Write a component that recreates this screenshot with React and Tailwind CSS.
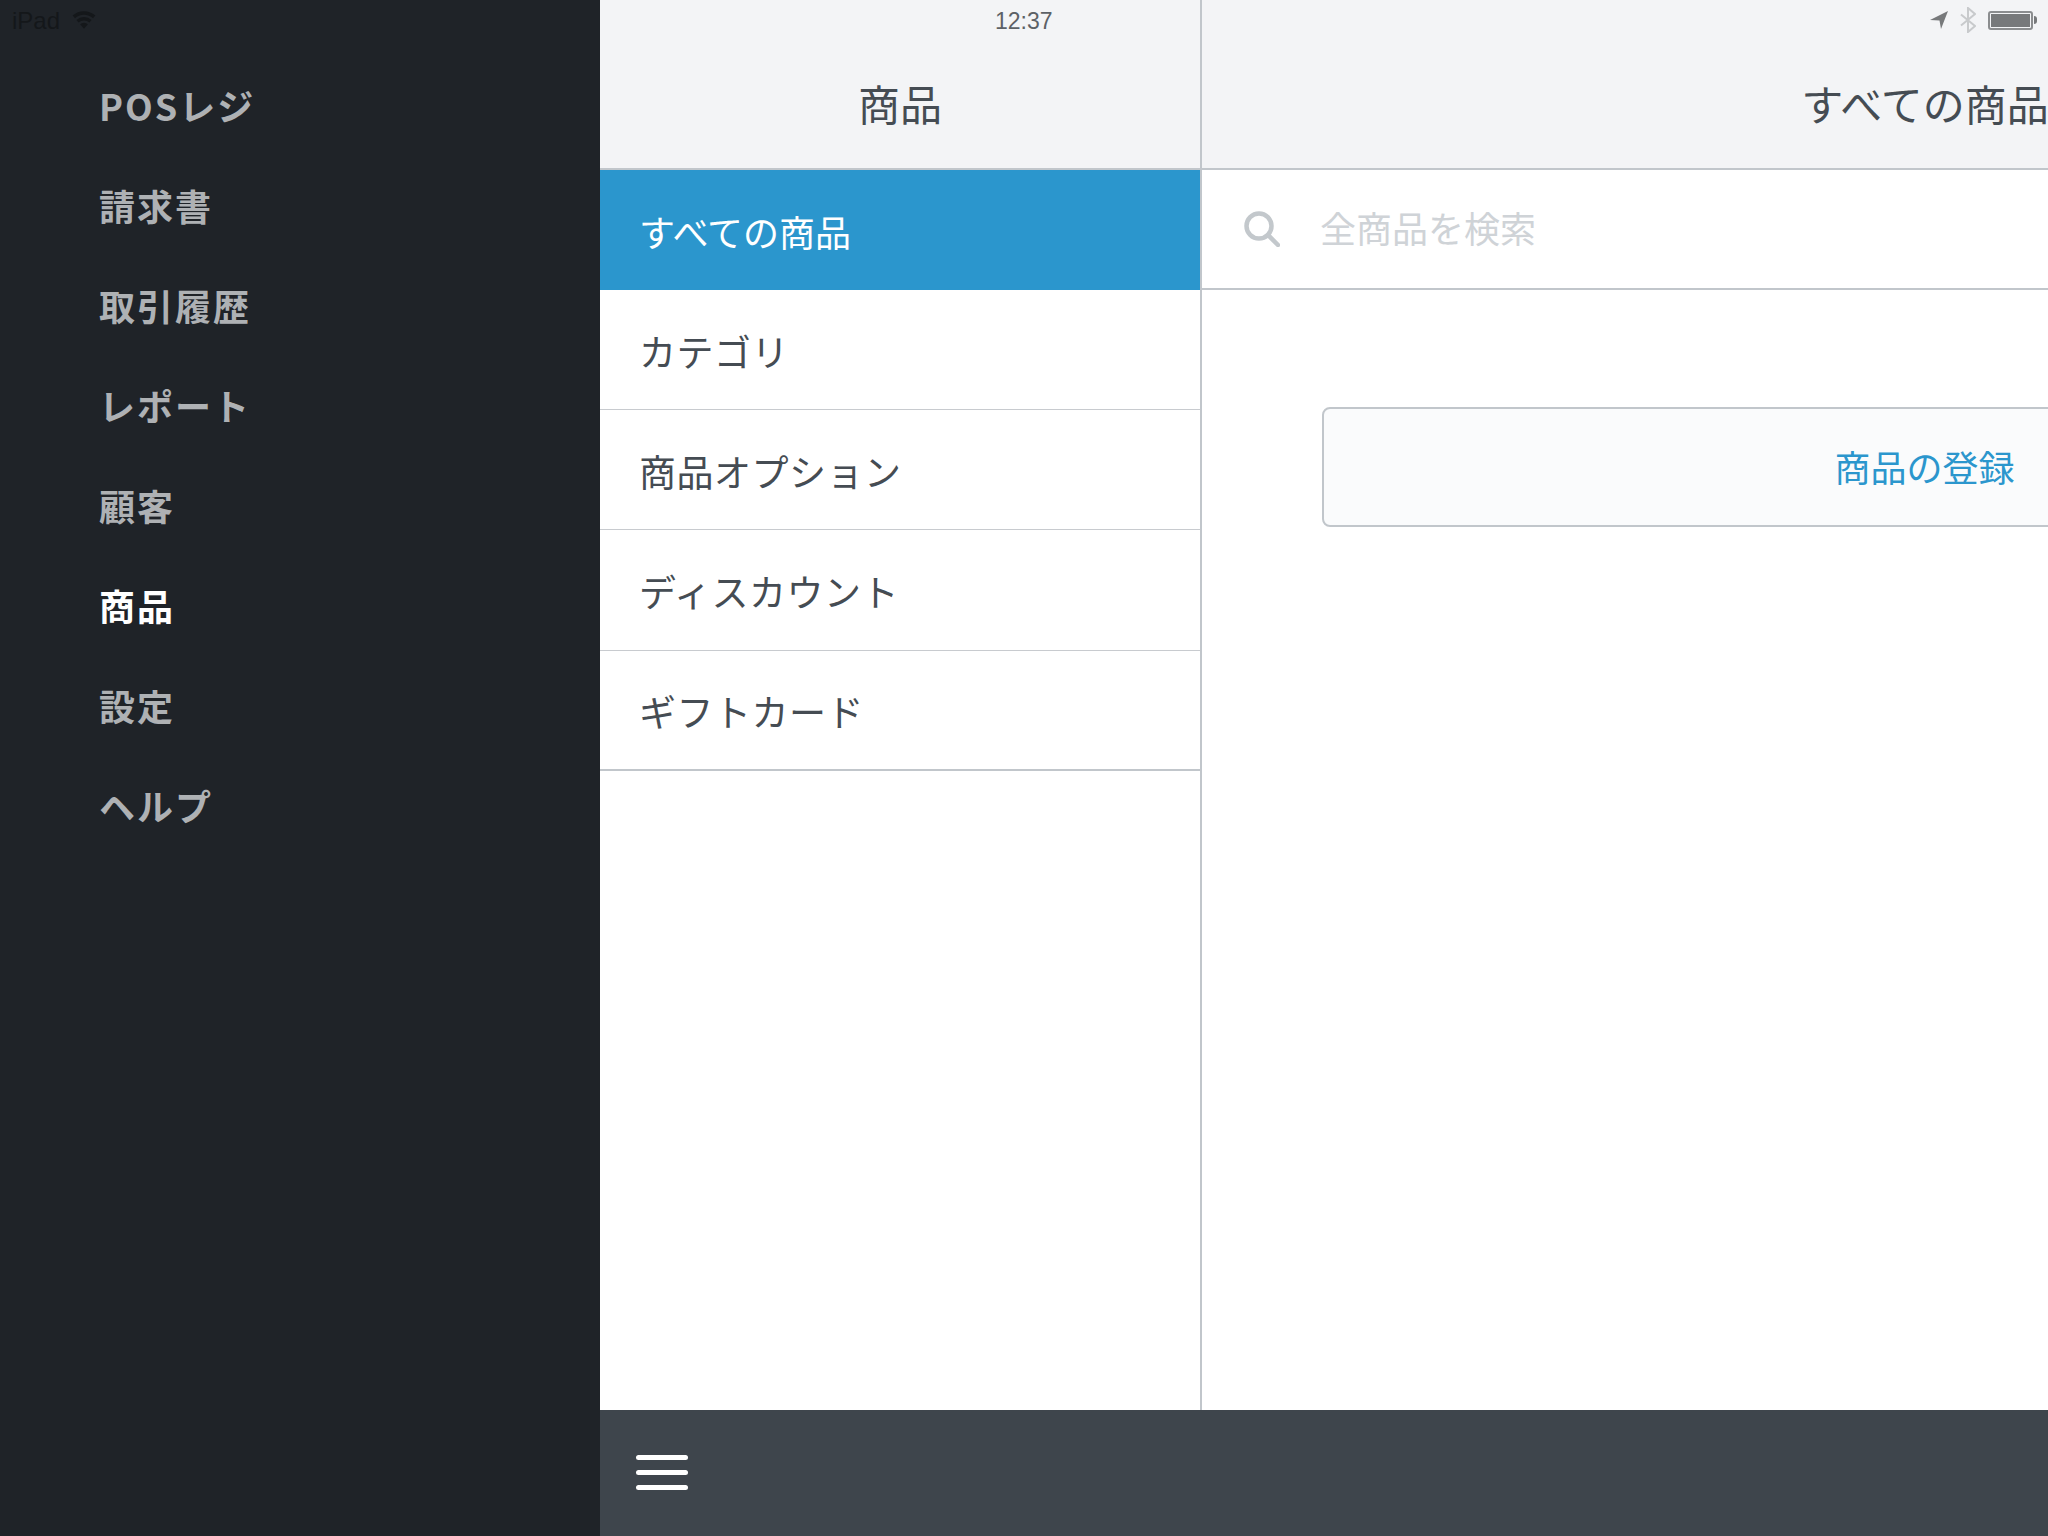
const sideItems = ["POSレジ", "請求書", "取引履歴", "レポート", "顧客", "商品", "設定", "ヘルプ"];
const rows = ["カテゴリ", "商品オプション", "ディスカウント", "ギフトカード"];

function StatusBar() {
  return (
    <div className="absolute top-0 left-0 w-[2048px] h-10 flex items-center justify-between font-['Liberation_Sans',sans-serif]">
      <div className="flex items-center gap-[11px] pl-3 pt-[1px] text-[24px] font-light text-[#14171a]">
        <span>iPad</span>
        <svg width="26" height="20" viewBox="0 0 24 18" fill="currentColor" className="-mt-1">
          <path d="M12 18 8.400 13.800a5.200 5.200 0 0 1 7.200 0z" />
          <path d="M7 12.200 5 9.900a10.400 10.400 0 0 1 14 0l-2 2.300a7.600 7.600 0 0 0-10 0z" />
          <path d="M3.700 8.300 1.500 5.800A15.600 15.600 0 0 1 12 1.800c4 0 7.700 1.500 10.500 4l-2.200 2.500A12.400 12.400 0 0 0 12 5c-3.200 0-6.100 1.200-8.300 3.300z" />
        </svg>
      </div>
      <span className="absolute left-[995px] pt-[2px] text-[23px] text-[#5c6166]">12:37</span>
      <div className="flex items-center pr-[11px]">
        <svg width="18" height="18" viewBox="0 0 18 18" fill="#77797b" className="mr-3">
          <path d="M0 9 18 0 11 18 9.500 9.500z" />
        </svg>
        <svg width="16" height="26" viewBox="0 0 16 26" fill="none" stroke="#c8cacc" strokeWidth="2" className="mr-3">
          <path d="M1 7.500 15 19 8 25V1l7 6L1 18.500" />
        </svg>
        <div className="w-[45px] h-[19px] border-2 border-[#8b8d8f] rounded-[3px] p-[1px]">
          <div className="w-full h-full bg-[#77797b]" />
        </div>
        <div className="w-[3px] h-[8px] ml-[1px] bg-[#77797b] rounded-r-sm" />
      </div>
    </div>
  );
}

export default function App() {
  return (
    <div className="relative w-[2048px] h-[1536px] overflow-hidden font-['Noto_Sans_CJK_JP',sans-serif]">
      <div className="flex w-[2648px] h-full">
        <nav className="w-[600px] shrink-0 bg-[#1f2328] pt-[55px] pl-[99px]">
          {sideItems.map((item) => (
            <div
              key={item}
              className={
                "h-[100px] flex items-center text-[36px] font-bold tracking-[2px] " +
                (item === "商品" ? "text-white" : "text-[#aeb1b4]")
              }
            >
              {item}
            </div>
          ))}
        </nav>

        <div className="flex-1 flex flex-col">
          <div className="flex-1 flex min-h-0">
            <div className="w-[602px] shrink-0 border-r-2 border-[#c1c6cb] bg-white">
              <div className="h-[170px] bg-[#f3f4f6] border-b-2 border-[#c1c6cb] pt-[36px] flex items-center justify-center text-[42px] text-[#454c53]">
                商品
              </div>
              <div className="h-[120px] bg-[#2b96cd] flex items-center pl-[39px] pt-[1px] text-[36px] text-white">
                すべての商品
              </div>
              {rows.map((row, i) => (
                <div
                  key={row}
                  className={
                    "flex items-center pl-[39px] pt-[4px] text-[37px] tracking-[0.5px] text-[#454c53] " +
                    (i === 2 ? "h-[121px] " : "h-[120px] ") +
                    (i === rows.length - 1 ? "border-b-2 border-[#c1c6cb]" : "border-b border-[#c8cbcf]")
                  }
                >
                  {row}
                </div>
              ))}
            </div>

            <div className="flex-1 bg-white">
              <div className="h-[170px] bg-[#f3f4f6] border-b-2 border-[#c1c6cb] pt-[36px] flex items-center justify-center text-[42px] text-[#454c53]">
                すべての商品
              </div>
              <div className="h-[120px] border-b-2 border-[#c1c6cb] flex items-center pl-[42px]">
                <svg width="36" height="36" viewBox="0 0 36 36" fill="none" stroke="#c3c8cc" strokeWidth="4.500" strokeLinecap="round">
                  <circle cx="15" cy="15" r="12.500" />
                  <path d="M24 24l10 10" />
                </svg>
                <span className="ml-[40px] pb-[5px] text-[36px] text-[#cfd3d7]">全商品を検索</span>
              </div>
              <div className="pl-[120px] pr-[121px] pt-[117px]">
                <div className="h-[120px] border-2 border-[#c1c6cb] rounded-[8px] bg-[#fafbfc] flex items-center justify-center pb-[2px] text-[36px] text-[#2b96cd]">
                  商品の登録
                </div>
              </div>
            </div>
          </div>

          <div className="h-[126px] shrink-0 bg-[#3e454c] flex flex-col justify-center gap-[10px] pl-9 pb-[1px]">
            <div className="w-[52px] h-[5px] rounded-full bg-white" />
            <div className="w-[52px] h-[5px] rounded-full bg-white" />
            <div className="w-[52px] h-[5px] rounded-full bg-white" />
          </div>
        </div>
      </div>
      <StatusBar />
    </div>
  );
}
